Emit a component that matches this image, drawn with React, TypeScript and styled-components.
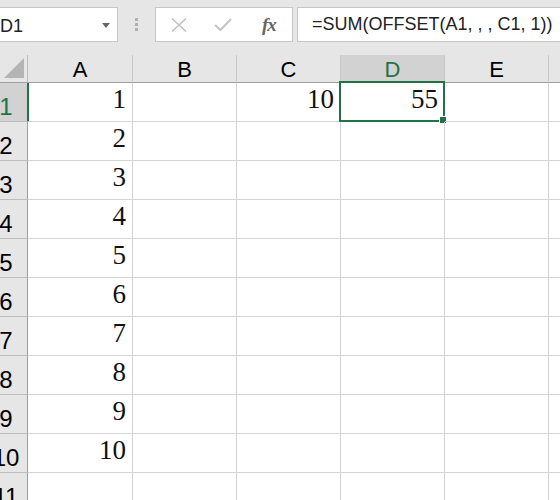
import React from 'react';
import styled, { createGlobalStyle } from 'styled-components';

const GlobalStyle = createGlobalStyle`
  html, body {
    margin: 0;
    padding: 0;
    background: #ffffff;
    overflow: hidden;
  }
  body {
    font-family: 'Liberation Sans', Arial, sans-serif;
  }
`;

const COLS = ['A', 'B', 'C', 'D', 'E', 'F'];
const ROWS = 11;

// values by row, column
const VALUES: Record<string, string> = {
  A1: '1',
  A2: '2',
  A3: '3',
  A4: '4',
  A5: '5',
  A6: '6',
  A7: '7',
  A8: '8',
  A9: '9',
  A10: '10',
  C1: '10',
  D1: '55',
};

const GREEN = '#217346';

const App = () => {
  return (
    <>
      <GlobalStyle />
      <Window>
        <Toolbar>
          <NameBox>
            <NameText>D1</NameText>
            <DropArrow />
          </NameBox>
          <Grip>
            <i />
            <i />
            <i />
          </Grip>
          <FuncBox>
            <FuncIcon>
              <svg width="16" height="14" viewBox="0 0 16 14">
                <path d="M1 0.5 L15 13.5 M15 0.5 L1 13.5" stroke="#c4c4c4" strokeWidth="1.6" fill="none" />
              </svg>
            </FuncIcon>
            <FuncIcon>
              <svg width="18" height="13" viewBox="0 0 18 13">
                <path d="M1 7 L6.5 12 L17 1" stroke="#c4c4c4" strokeWidth="2" fill="none" />
              </svg>
            </FuncIcon>
            <Fx>fx</Fx>
          </FuncBox>
          <FormulaBox>=SUM(OFFSET(A1, , , C1, 1))</FormulaBox>
        </Toolbar>

        <Sheet>
          <Corner>
            <Triangle />
          </Corner>
          {COLS.map((c) => (
            <ColHead key={c} $active={c === 'D'}>
              {c}
            </ColHead>
          ))}
          {Array.from({ length: ROWS }, (_, i) => i + 1).map((r) => (
            <React.Fragment key={r}>
              <RowHead $active={r === 1}>
                <RowNum>{r}</RowNum>
              </RowHead>
              {COLS.map((c) => (
                <Cell key={c + r}>
                  {VALUES[c + r]}
                  {c === 'D' && r === 1 && (
                    <Selection>
                      <Handle />
                    </Selection>
                  )}
                </Cell>
              ))}
            </React.Fragment>
          ))}
        </Sheet>
      </Window>
    </>
  );
};

const Window = styled.div`
  width: 560px;
  height: 500px;
  overflow: hidden;
  background: #ffffff;
`;

const Toolbar = styled.div`
  display: flex;
  align-items: flex-start;
  height: 55px;
  padding-top: 7px;
  box-sizing: border-box;
  background: #e6e6e6;
`;

const NameBox = styled.div`
  position: relative;
  display: flex;
  align-items: center;
  width: 119px;
  height: 35px;
  margin-left: -1px;
  box-sizing: border-box;
  border: 1px solid #c6c6c6;
  background: #ffffff;
`;

const NameText = styled.span`
  font-size: 18px;
  color: #222;
  padding-top: 4px;
`;

const DropArrow = styled.span`
  position: absolute;
  right: 7px;
  top: 15px;
  width: 0;
  height: 0;
  border-left: 4px solid transparent;
  border-right: 4px solid transparent;
  border-top: 5px solid #666;
`;

const Grip = styled.div`
  display: flex;
  flex-direction: column;
  gap: 2px;
  margin: 11px 17px 0 17px;
  i {
    display: block;
    width: 3px;
    height: 3px;
    background: #b0b0b0;
  }
`;

const FuncBox = styled.div`
  display: flex;
  align-items: center;
  width: 138px;
  height: 35px;
  box-sizing: border-box;
  border: 1px solid #c6c6c6;
  background: #ffffff;
  padding-left: 15px;
`;

const FuncIcon = styled.span`
  display: flex;
  margin-right: 27px;
`;

const Fx = styled.span`
  font-family: 'Liberation Serif', 'Times New Roman', serif;
  font-style: italic;
  font-weight: bold;
  font-size: 19px;
  color: #666;
  margin-left: 3px;
  letter-spacing: -1px;
`;

const FormulaBox = styled.div`
  flex: 1;
  display: flex;
  align-items: center;
  height: 35px;
  margin-left: 4px;
  margin-right: -10px;
  padding-left: 14px;
  box-sizing: border-box;
  border: 1px solid #c6c6c6;
  background: #ffffff;
  font-size: 18px;
  color: #222;
  white-space: nowrap;
  overflow: hidden;
`;

const Sheet = styled.div`
  display: grid;
  grid-template-columns: 28px 105px repeat(5, 104px);
  grid-template-rows: 28px repeat(${ROWS}, 39px);
`;

const Corner = styled.div`
  position: relative;
  background: #e6e6e6;
  border-right: 1px solid #bdbdbd;
  border-bottom: 1px solid #9e9e9e;
  box-sizing: border-box;
`;

const Triangle = styled.div`
  position: absolute;
  left: 4px;
  top: 3px;
  width: 0;
  height: 0;
  border-left: 20px solid transparent;
  border-bottom: 20px solid #b4b4b4;
`;

const ColHead = styled.div<{ $active?: boolean }>`
  display: flex;
  align-items: center;
  justify-content: center;
  padding-top: 3px;
  box-sizing: border-box;
  background: ${(p) => (p.$active ? '#d2d2d2' : '#e6e6e6')};
  border-right: 1px solid #c8c8c8;
  border-bottom: 1px solid #9e9e9e;
  font-size: 22px;
  color: ${(p) => (p.$active ? GREEN : '#000')};
`;

const RowHead = styled.div<{ $active?: boolean }>`
  display: flex;
  align-items: flex-end;
  overflow: hidden;
  box-sizing: border-box;
  padding-bottom: 2px;
  background: ${(p) => (p.$active ? '#d2d2d2' : '#e6e6e6')};
  border-right: ${(p) => (p.$active ? `2px solid ${GREEN}` : '1px solid #9e9e9e')};
  margin-right: ${(p) => (p.$active ? '-1px' : '0')};
  border-bottom: 1px solid #bdbdbd;
  font-size: 24px;
  line-height: 1;
  color: ${(p) => (p.$active ? GREEN : '#000')};
`;

const RowNum = styled.span`
  display: flex;
  justify-content: center;
  width: 12px;
  white-space: nowrap;
`;

const Cell = styled.div`
  position: relative;
  display: flex;
  align-items: flex-end;
  justify-content: flex-end;
  box-sizing: border-box;
  padding: 0 6px 8px 0;
  border-right: 1px solid #d4d4d4;
  border-bottom: 1px solid #d4d4d4;
  font-family: 'Liberation Serif', 'Times New Roman', serif;
  font-size: 27px;
  line-height: 1;
  color: #111;
`;

const Selection = styled.div`
  position: absolute;
  left: -2px;
  top: -2px;
  right: -1px;
  bottom: -1px;
  border: 2px solid ${GREEN};
  pointer-events: none;
`;

const Handle = styled.div`
  position: absolute;
  right: -4px;
  bottom: -4px;
  width: 6px;
  height: 6px;
  background: ${GREEN};
  border: 1px solid #fff;
`;

export default App;
